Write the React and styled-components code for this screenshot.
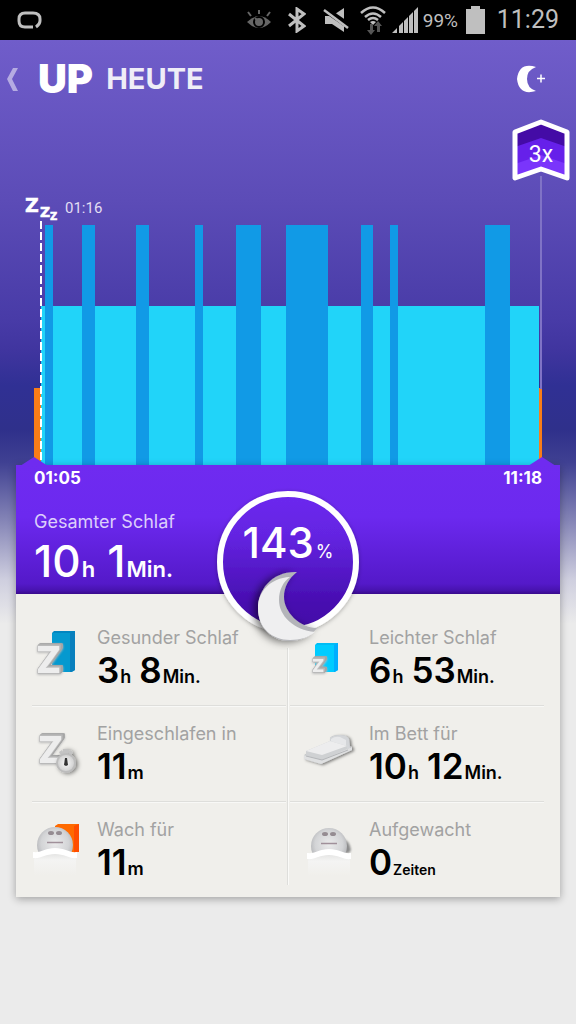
import styled, { createGlobalStyle } from "styled-components";

const GlobalStyle = createGlobalStyle`
  * {
    box-sizing: border-box;
    margin: 0;
    padding: 0;
  }
  body {
    font-family: "Inter", "Liberation Sans", sans-serif;
    background-color: #ebebeb;
  }
  button {
    border: none;
    background: none;
    cursor: pointer;
  }
`;

const Wrap = styled.div`
  width: 100%;
  min-height: 100vh;
  background: linear-gradient(
    #705dca 40px,
    #5c4cb7 200px,
    #483ba7 320px,
    #40359f 350px,
    #303094 385px,
    #2f308b 430px,
    #3f4092 462px,
    #8484b6 520px,
    #cfcfdf 580px,
    #ebebeb 624px
  );
`;

const StatusBar = styled.div`
  display: flex;
  align-items: center;
  justify-content: space-between;
  height: 40px;
  padding: 0 17px;
  background-color: black;
  font-family: "Roboto", sans-serif;
  color: #bfbfbf;
  svg {
    display: block;
  }
`;
const StatusGroup = styled.div`
  display: flex;
  align-items: center;
`;
const StatusIcon = styled.svg`
  margin-right: ${({ $gap }) => $gap}px;
`;
const Battery = styled.span`
  width: 35px;
  margin-right: 8px;
  font-size: 19px;
`;
const Clock = styled.span`
  font-size: 25px;
  line-height: 40px;
`;

const Header = styled.header`
  display: flex;
  align-items: center;
  height: 77px;
  padding: 0 28px 0 4px;
`;
const BackBtn = styled.button`
  display: flex;
  width: 34px;
  height: 48px;
  align-items: center;
`;
const Logo = styled.strong`
  font-size: 40px;
  font-weight: 900;
  line-height: 48px;
  color: white;
`;
const Title = styled.h1`
  flex: 1;
  margin-left: 13px;
  font-size: 29px;
  font-weight: 700;
  line-height: 48px;
  color: #efedf7;
`;
const MoonBtn = styled.button`
  display: flex;
  align-items: center;
  height: 48px;
`;

const Chart = styled.section`
  position: relative;
  display: flex;
  align-items: flex-end;
  height: 348px;
  padding: 0 34px;
`;
const barHeight = { deep: 240, light: 159, awake: 77 };
const barColor = { deep: "#119ae6", light: "#21d4f9", awake: "#f97d18" };
const Bar = styled.div`
  flex: ${({ $span }) => $span} 1 0;
  height: ${({ $kind }) => barHeight[$kind]}px;
  background-color: ${({ $kind }) => barColor[$kind]};
`;
const SleepMarker = styled.div`
  position: absolute;
  left: 24px;
  top: 78px;
  bottom: 0;
`;
const SleepLabel = styled.div`
  display: flex;
  align-items: center;
  gap: 5px;
  height: 26px;
  font-family: "Roboto", sans-serif;
  font-size: 15px;
  color: #e2def3;
  svg {
    overflow: visible;
  }
`;
const DashLine = styled.div`
  width: 2px;
  height: 244px;
  margin-left: 16px;
  background: repeating-linear-gradient(white 0 8px, transparent 8px 11px);
`;
const Goal = styled.div`
  position: absolute;
  top: 0;
  right: 5px;
  bottom: 0;
  display: flex;
  flex-direction: column;
  align-items: center;
`;
const GoalLine = styled.div`
  width: 2px;
  height: 213px;
  margin-top: -7px;
  background-color: #8073c6;
`;

const Card = styled.main`
  position: relative;
  margin: 0 16px;
  background-color: #f0efeb;
  box-shadow: 0 2px 8px rgba(0, 0, 0, 0.32);
`;
const Pointer = styled.i`
  position: absolute;
  top: -8px;
  ${({ $side }) => $side}: 4px;
  width: 28px;
  height: 9px;
  background-color: #6f2bf0;
  clip-path: polygon(50% 0, 100% 100%, 0 100%);
`;
const Summary = styled.section`
  padding: 1px 18px 9px;
  color: white;
  background: linear-gradient(
    #6f2bf0,
    #6c29ef 40%,
    #5419c9 92%,
    #4813b0 97%,
    #390a8c
  );
`;
const Times = styled.div`
  display: flex;
  justify-content: space-between;
  margin-bottom: 20px;
  font-size: 17px;
  font-weight: 700;
  line-height: 24px;
`;
const Label = styled.dt`
  font-size: 18px;
  line-height: 24px;
  color: ${({ $light }) => ($light ? "#dccffb" : "#a2a2a2")};
`;
const Value = styled.dd`
  display: flex;
  align-items: baseline;
  gap: ${({ $big }) => ($big ? 12 : 8)}px;
  height: ${({ $big }) => ($big ? 48 : 36)}px;
  margin-top: ${({ $big }) => ($big ? 3 : 2)}px;
  font-size: ${({ $big }) => ($big ? 44 : 35)}px;
  font-weight: ${({ $big }) => ($big ? 500 : 600)};
  line-height: ${({ $big }) => ($big ? 48 : 36)}px;
  small {
    margin-left: 1px;
    font-size: ${({ $big, $tiny }) => ($big ? 22 : $tiny ? 14 : 18)}px;
    font-weight: 600;
    line-height: 1;
  }
`;

const Ring = styled.div`
  position: absolute;
  top: 17px;
  left: 50%;
  width: 160px;
  height: 168px;
  margin-left: -80px;
  > svg {
    position: absolute;
    inset: 0;
  }
`;
const Percent = styled.p`
  position: relative;
  padding-top: 37px;
  text-align: center;
  font-size: 42px;
  font-weight: 500;
  line-height: 48px;
  color: white;
  small {
    margin-left: 2px;
    font-size: 18px;
    font-weight: 400;
    line-height: 1;
  }
`;

const Stats = styled.dl`
  position: relative;
  display: grid;
  grid-template-columns: 1fr 1fr;
  padding: 16px 16px 0;
  &::after {
    content: "";
    position: absolute;
    top: 54px;
    bottom: 12px;
    left: 50%;
    width: 4px;
    margin-left: -2px;
    background: linear-gradient(
      90deg,
      #f0efeb 1px,
      #dededb 1px 2px,
      #fafaf8 2px 3px,
      #f0efeb 3px
    );
  }
`;
const Stat = styled.div`
  display: flex;
  height: 96px;
  border-bottom: 1px solid #dededb;
  box-shadow: 0 1px 0 #f8f8f6;
  &:nth-child(even) {
    padding-left: 16px;
  }
  &:nth-last-child(-n + 2) {
    height: 95px;
    border-bottom: none;
    box-shadow: none;
  }
  > svg {
    flex: none;
    margin: 16px 8px 0 0;
    overflow: visible;
  }
`;
const StatText = styled.div`
  padding-top: 16px;
  color: black;
`;
const BlockLetter = styled.text`
  font-family: "Inter", sans-serif;
  font-weight: 800;
  fill: #ededed;
  stroke: #bcbcbc;
  stroke-width: 1.5px;
  paint-order: stroke;
  stroke-linejoin: round;
  filter: drop-shadow(1px -1px 0 #b4b4b4) drop-shadow(1px 0 0 #a6a6a6)
    drop-shadow(1px -1px 0 #a6a6a6) drop-shadow(0 1px 1px #bbb);
`;

const bars = [
  ["awake", 7],
  ["light", 4],
  ["deep", 8],
  ["light", 29],
  ["deep", 13],
  ["light", 41],
  ["deep", 13],
  ["light", 46],
  ["deep", 8],
  ["light", 33],
  ["deep", 25],
  ["light", 25],
  ["deep", 42],
  ["light", 33],
  ["deep", 12],
  ["light", 17],
  ["deep", 8],
  ["light", 87],
  ["deep", 25],
  ["light", 29],
  ["awake", 3],
];

const DeepIcon = () => (
  <svg width="57" height="60" viewBox="0 0 57 60">
    <path d="M20 7l2-2h21v39l-3 2H20z" fill="#0286c0" />
    <path d="M20 7h18v39H20z" fill="#0599cf" />
    <path d="M38 7l5-2v39l-5 2z" fill="#087fbd" />
    <BlockLetter x="4" y="47" fontSize="37">Z</BlockLetter>
  </svg>
);

const LightIcon = () => (
  <svg width="57" height="60" viewBox="0 0 57 60">
    <path d="M11 19l2-2h21v27l-3 2H11z" fill="#00bdf5" />
    <path d="M11 19h19v27H11z" fill="#00ccff" />
    <path d="M30 19l4-2v27l-4 2z" fill="#00aeff" />
    <BlockLetter x="8" y="46" fontSize="18">Z</BlockLetter>
  </svg>
);

const TimerIcon = () => (
  <svg width="57" height="60" viewBox="0 0 57 60">
    <defs>
      <filter id="timerShade" x="-30%" y="-30%" width="180%" height="180%">
        <feDropShadow dx="2" dy="1" stdDeviation="2" floodOpacity="0.5" />
      </filter>
      <radialGradient id="dial">
        <stop offset="0" stopColor="#f7f7f7" />
        <stop offset="1" stopColor="#d2d2d2" />
      </radialGradient>
    </defs>
    <BlockLetter x="6" y="41" fontSize="37">Z</BlockLetter>
    <g filter="url(#timerShade)">
      <path d="M31 27h6v5h-6zM27 30l3-2 2 4-3 2zM41 30l-3-2-2 4 3 2z" fill="#c3c3c3" />
      <circle cx="34" cy="41" r="10" fill="#bcbcbc" />
      <circle cx="34" cy="41" r="8" fill="url(#dial)" />
    </g>
    <path d="M33 36h2l1 7-2 1-2-1z" fill="#333" />
  </svg>
);

const BedIcon = () => (
  <svg width="57" height="60" viewBox="0 0 57 60">
    <defs>
      <filter id="bedShade" x="-20%" y="-30%" width="150%" height="180%">
        <feDropShadow dx="2" dy="1" stdDeviation="1.5" floodOpacity="0.5" />
      </filter>
    </defs>
    <g filter="url(#bedShade)">
      <path d="M0 33l26-12v-5q2-3 10-3 7 0 9 4l1 7 2 1v3L17 42 0 37z" fill="#bcbec1" />
    </g>
    <path d="M26 24v-8q3-3 10-3 7 0 9 4l1 9-9 4z" fill="#d3d5d8" />
    <path d="M27 22v-5q4-3 9-2l6 3v9z" fill="#e6e7e9" />
    <path d="M2 29l24-10 17 5v5L18 38 2 34z" fill="#cfd1d3" />
    <path d="M2 29l24-10 17 5-25 9z" fill="#ededee" />
    <path d="M0 33l18 5 30-13v3L17 42 0 37z" fill="#dfe0e1" />
    <path d="M2 34l16 4 26-10" fill="none" stroke="#b4b6b9" strokeWidth="1" />
  </svg>
);

const Sleeper = ({ id, x = 0 }) => (
  <g transform={`translate(${x} ${x ? 1 : 0})`}>
    <defs>
      <radialGradient id={`head${id}`} cx="0.5" cy="0.45" r="0.55">
        <stop offset="0" stopColor="#ebebec" />
        <stop offset="0.7" stopColor="#d3d4d6" />
        <stop offset="1" stopColor="#b4b5b8" />
      </radialGradient>
      <linearGradient id={`sheet${id}`} x1="0" y1="0" x2="0" y2="1">
        <stop offset="0" stopColor="#dcdcdb" />
        <stop offset="0.4" stopColor="#f4f4f3" />
        <stop offset="1" stopColor="#f0efeb" />
      </linearGradient>
    </defs>
    <circle cx="23" cy="27" r="18" fill={`url(#head${id})`} />
    <ellipse cx="19" cy="15" rx="3" ry="2" fill="#958c92" />
    <ellipse cx="27" cy="15" rx="3" ry="2" fill="#958c92" />
    <path d="M15 24.5h16" stroke="#a0909a" strokeWidth="1.5" />
    <path d="M2 36Q22 28 44 36v21H2z" fill={`url(#sheet${id})`} />
    <path d="M1 34c9 1 12-4 22-4s14 5 22 4v6c-8 1-12-4-22-4s-14 5-22 4z" fill="white" />
  </g>
);

const AwakeIcon = () => (
  <svg width="57" height="60" viewBox="0 0 57 60">
    <path d="M23 8l3-2h21v27l-4 2H23z" fill="#ff6a00" />
    <path d="M42 8l5-2v28h-5z" fill="#ff4d00" />
    <Sleeper id="a" />
  </svg>
);

const WokenIcon = () => (
  <svg width="57" height="60" viewBox="0 0 57 60">
    <defs>
      <filter id="wokenShade">
        <feGaussianBlur stdDeviation="1" />
      </filter>
    </defs>
    <path d="M34 18q12 4 13 14l-2 3H32z" fill="#8b8b8b" filter="url(#wokenShade)" />
    <Sleeper id="b" x={2} />
  </svg>
);

const stats = [
  { label: "Gesunder Schlaf", value: [["3", "h"], ["8", "Min."]], Icon: DeepIcon },
  { label: "Leichter Schlaf", value: [["6", "h"], ["53", "Min."]], Icon: LightIcon },
  { label: "Eingeschlafen in", value: [["11", "m"]], Icon: TimerIcon },
  { label: "Im Bett für", value: [["10", "h"], ["12", "Min."]], Icon: BedIcon },
  { label: "Wach für", value: [["11", "m"]], Icon: AwakeIcon },
  { label: "Aufgewacht", value: [["0", "Zeiten"]], Icon: WokenIcon, tiny: true },
];

const Amount = ({ value, ...rest }) => (
  <Value {...rest}>
    {value.map(([num, unit]) => (
      <span key={unit}>
        {num}
        <small>{unit}</small>
      </span>
    ))}
  </Value>
);

const StatusIcons = () => (
  <>
    <StatusIcon $gap={16} width="26" height="22" viewBox="0 0 26 22">
      <path d="M1 13Q13 1 25 13 13 25 1 13z" fill="#666" />
      <circle cx="13" cy="13" r="5" fill="none" stroke="#000" strokeWidth="2" />
      <path d="M13 13l-4-4M13 5V1M5 7L2 3M21 7l3-4" stroke="#666" strokeWidth="2" />
    </StatusIcon>
    <StatusIcon $gap={17} width="18" height="26" viewBox="0 0 18 26">
      <path d="M1 7l15 12-7 5V2l7 5L1 19" fill="none" stroke="#bfbfbf" strokeWidth="3" />
    </StatusIcon>
    <StatusIcon $gap={11} width="26" height="26" viewBox="0 0 26 26">
      <path d="M2 9h7l12-8v24L9 17H2z" fill="#bfbfbf" />
      <path d="M0 1l26 18" stroke="#000" strokeWidth="6" />
      <path d="M1 3l24 18" stroke="#bfbfbf" strokeWidth="2.5" />
    </StatusIcon>
    <StatusIcon $gap={6} width="26" height="30" viewBox="0 0 26 30">
      <path
        d="M1 8Q13-3 25 8M5 12q8-7 16 0M8 15q5-4 10 0"
        fill="none"
        stroke="#bfbfbf"
        strokeWidth="2.5"
      />
      <path d="M10 17q3-2 6 0l-3 3z" fill="#bfbfbf" />
      <path d="M10 19h3v6h2l-4 5-4-5h3zM17 27v-6h-3l4-5 4 5h-2v6z" fill="#555" />
    </StatusIcon>
    <StatusIcon $gap={5} width="26" height="26" viewBox="0 0 26 26">
      <path
        d="M0 26l5-5v5zM7 26v-7l4-4v11zM12 26V14l4-4v16zM17 26V9l4-4v21zM22 26V4l4-4v26z"
        fill="#bfbfbf"
      />
    </StatusIcon>
  </>
);

export default function App() {
  return (
    <>
      <GlobalStyle />
      <Wrap>
        <StatusBar>
          <svg width="26" height="20" viewBox="0 0 26 20">
            <path
              d="M16 17H8q-6 0-6-6V9q0-6 6-6h8q7 0 7 6v2q0 3-4 6"
              fill="none"
              stroke="#bfbfbf"
              strokeWidth="3"
            />
          </svg>
          <StatusGroup>
            <StatusIcons />
            <Battery>99%</Battery>
            <StatusIcon $gap={11} width="20" height="30" viewBox="0 0 20 30">
              <path d="M5 1h9v3h5v25H0V4h5z" fill="#bfbfbf" />
            </StatusIcon>
            <Clock>11:29</Clock>
          </StatusGroup>
        </StatusBar>

        <Header>
          <BackBtn aria-label="Zurück">
            <svg width="14" height="24" viewBox="0 0 14 24">
              <path d="M9 1h5L8 12l6 12H9L3 12z" fill="#b5abe2" />
            </svg>
          </BackBtn>
          <Logo>UP</Logo>
          <Title>HEUTE</Title>
          <MoonBtn aria-label="Schlaf hinzufügen">
            <svg width="31" height="28" viewBox="0 0 31 28">
              <path d="M19 2Q10 5 10 14t9 12Q2 31 0 14 2-3 19 2z" fill="white" />
              <path d="M20 13.5h8M24 9.5v8" stroke="white" strokeWidth="1.5" />
            </svg>
          </MoonBtn>
        </Header>

        <Chart>
          {bars.map(([kind, span], i) => (
            <Bar key={i} $kind={kind} $span={span} />
          ))}
          <SleepMarker>
            <SleepLabel>
              <svg width="36" height="26" viewBox="0 0 36 26" fill="white">
                <g
                  fontFamily="DejaVu Sans, sans-serif"
                  fontWeight="700"
                  stroke="white"
                  strokeWidth="0.5"
                >
                  <text x="1" y="17" fontSize="19">Z</text>
                  <text x="16" y="22" fontSize="14">Z</text>
                  <text x="26" y="25" fontSize="10">Z</text>
                </g>
              </svg>
              <time>01:16</time>
            </SleepLabel>
            <DashLine />
          </SleepMarker>
          <Goal>
            <svg width="60" height="66" viewBox="0 0 60 66">
              <path d="M4 15l26-10 26 10v46l-26-9-26 9z" fill="#6620ea" />
              <path d="M4 15l26-10 26 10v15l-26-9-26 9z" fill="#440ba6" />
              <path d="M4 47l26-9 26 9v14l-26-9-26 9z" fill="#7a35fb" />
              <path
                d="M4 15l26-10 26 10v46l-26-9-26 9z"
                fill="none"
                stroke="white"
                strokeWidth="5"
                strokeLinejoin="round"
              />
              <text
                x="30"
                y="45"
                textAnchor="middle"
                fontFamily="Roboto, sans-serif"
                fontSize="23"
                fill="white"
              >
                3x
              </text>
            </svg>
            <GoalLine />
          </Goal>
        </Chart>

        <Card>
          <Pointer $side="left" />
          <Pointer $side="right" />
          <Summary>
            <Times>
              <time>01:05</time>
              <time>11:18</time>
            </Times>
            <dl>
              <Label $light>Gesamter Schlaf</Label>
              <Amount $big value={[["10", "h"], ["1", "Min."]]} />
            </dl>
          </Summary>
          <Stats>
            {stats.map(({ label, value, Icon, tiny }) => (
              <Stat key={label}>
                <Icon />
                <StatText>
                  <Label>{label}</Label>
                  <Amount value={value} $tiny={tiny} />
                </StatText>
              </Stat>
            ))}
          </Stats>
          <Ring>
            <svg width="160" height="168" viewBox="0 0 160 168">
              <defs>
                <linearGradient id="ringFill" x1="0" y1="0" x2="0" y2="1">
                  <stop offset="0" stopColor="#6c29ef" />
                  <stop offset="0.3" stopColor="#6424e2" />
                  <stop offset="0.8" stopColor="#470eb0" />
                  <stop offset="1" stopColor="#430ca8" />
                </linearGradient>
                <filter id="ringShade" x="-20%" y="-20%" width="140%" height="140%">
                  <feDropShadow dx="0" dy="1" stdDeviation="2" floodOpacity="0.3" />
                </filter>
                <filter id="moonShade" x="-40%" y="-40%" width="180%" height="180%">
                  <feDropShadow dx="-4" dy="1" stdDeviation="4" floodOpacity="0.55" />
                </filter>
              </defs>
              <circle
                cx="80"
                cy="80"
                r="68"
                fill="url(#ringFill)"
                stroke="white"
                strokeWidth="6"
                filter="url(#ringShade)"
              />
              <path
                d="M89 90C64 89 50 108 50 126c0 20 14 33 32 33 12 0 21-5 27-13-17 0-33-16-33-31 0-10 5-19 13-25z"
                fill="#b3b4b9"
                filter="url(#moonShade)"
              />
              <path
                d="M82 95C62 96 50 110 50 126c0 20 14 32 32 32 11 0 19-3 25-8-21-2-36-16-36-32 0-10 4-18 11-23z"
                fill="#efeff0"
              />
            </svg>
            <Percent>
              143<small>%</small>
            </Percent>
          </Ring>
        </Card>
      </Wrap>
    </>
  );
}
